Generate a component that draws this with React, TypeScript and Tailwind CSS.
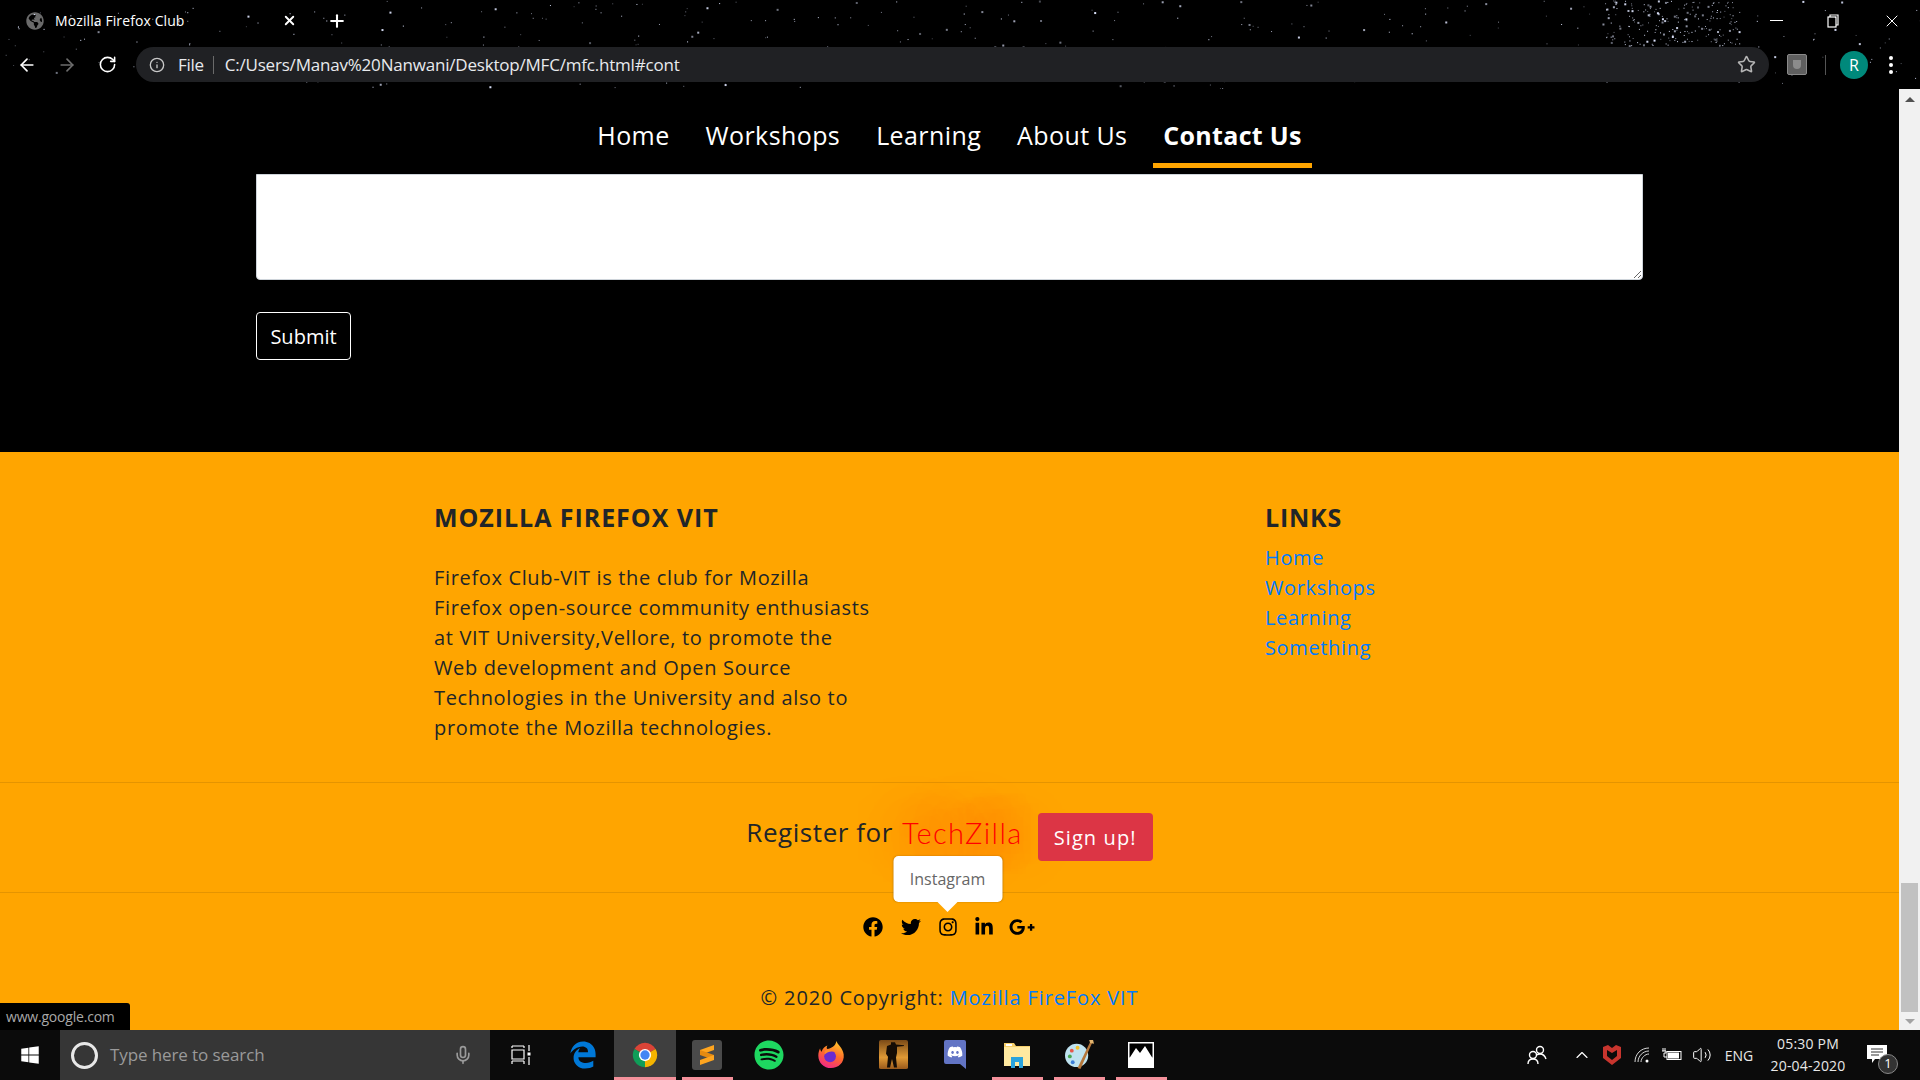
import React, { useMemo } from 'react';
import { ArrowLeft, ArrowRight, RotateCw, Info, Star, X, Plus, Mic, ChevronUp, Volume2 } from 'lucide-react';
import { FaFacebook, FaTwitter, FaInstagram, FaLinkedinIn, FaGooglePlusG, FaWindows, FaGlobeAmericas, FaSpotify, FaDiscord, FaEdgeLegacy } from 'react-icons/fa';

const sans = "font-['Open_Sans','Noto_Sans',sans-serif]";

// tiny seeded generator so the star field stays the same on every render
const makeStars = () => {
  let seed = 1234;
  const rnd = () => {
    seed = (seed * 16807) % 2147483647;
    return seed / 2147483647;
  };
  const stars: { x: number; y: number; s: number; o: number }[] = [];
  for (let i = 0; i < 420; i++) {
    stars.push({ x: rnd() * 1920, y: rnd() * 89, s: rnd() > 0.85 ? 2 : 1, o: 0.3 + rnd() * 0.7 });
  }
  for (let i = 0; i < 200; i++) {
    stars.push({ x: 1600 + rnd() * 140, y: rnd() * 46, s: rnd() > 0.8 ? 2 : 1, o: 0.4 + rnd() * 0.6 });
  }
  return stars;
};

const StarField = () => {
  const stars = useMemo(makeStars, []);
  return (
    <svg className="absolute inset-0 h-[89px] w-[1920px]" viewBox="0 0 1920 89">
      {stars.map((s, i) => (
        <rect key={i} x={s.x} y={s.y} width={s.s} height={s.s} fill="#dfe6ff" opacity={s.o} />
      ))}
    </svg>
  );
};

const ChromeBar = () => (
  <div className="relative h-[89px] shrink-0 bg-black text-white">
    <StarField />
    <div className="relative flex h-[47px] items-center pb-[6px]">
      <FaGlobeAmericas size={18} className="ml-[26px] text-[#6a6a6a]" />
      <span className="ml-[11px] w-[227px] text-[14px] tracking-[0.1px] text-white">Mozilla Firefox Club</span>
      <X size={15} strokeWidth={3} />
      <Plus size={20} strokeWidth={2.5} className="ml-[30px]" />
      <div className="ml-auto flex items-center">
        <div className="h-[1.5px] w-[13px] bg-white" />
        <svg width="14" height="14" viewBox="0 0 14 14" className="ml-[44px]" fill="none" stroke="white" strokeWidth="1.2">
          <rect x="1" y="3" width="8" height="10" />
          <path d="M3 3V1h8v10H9" />
        </svg>
        <X size={20} strokeWidth={1.2} className="ml-[41px] mr-[18px]" />
      </div>
    </div>
    <div className="relative flex h-[35px] items-center">
      <div className="flex w-[136px] items-center pl-[17px]">
        <ArrowLeft size={20} />
        <ArrowRight size={20} className="ml-[20px] text-[#6e6e6e]" />
        <RotateCw size={19} className="ml-[21px]" />
      </div>
      <div className="flex h-[35px] w-[1633px] items-center rounded-full bg-[#202124] pl-[13px]">
        <Info size={16} className="text-[#c8c8c8]" />
        <span className="ml-[13px] text-[17px] tracking-[-0.3px] text-[#e8eaed]">File</span>
        <div className="ml-[9px] h-[18px] w-px bg-[#6a6a6a]" />
        <span className="ml-[11px] text-[17px] tracking-[-0.2px] text-[#e8eaed]">C:/Users/Manav%20Nanwani/Desktop/MFC/mfc.html#cont</span>
        <Star size={19} className="ml-auto mr-[13px] text-[#b5b5b5]" />
      </div>
      <div className="ml-[18px] flex h-[21px] w-[20px] items-center justify-center rounded-[2px] border border-[#8a8a8a] bg-[#5f5f5f]">
        <div className="h-[9px] w-[8px] rounded-b-[4px] bg-[#8b8b8b]" />
      </div>
      <div className="ml-[18px] h-[20px] w-px bg-[#555]" />
      <div className="ml-[14px] flex h-[28px] w-[28px] items-center justify-center rounded-full bg-[#00897b] text-[16px] text-white">R</div>
      <div className="ml-[21px] flex flex-col gap-[3px]">
        <div className="h-[4px] w-[4px] rounded-full bg-white" />
        <div className="h-[4px] w-[4px] rounded-full bg-white" />
        <div className="h-[4px] w-[4px] rounded-full bg-white" />
      </div>
    </div>
  </div>
);

const navItems = ['Home', 'Workshops', 'Learning', 'About Us'];

const Nav = () => (
  <nav className="flex h-[85px] shrink-0 items-start justify-center bg-black pt-[25px] text-white">
    {navItems.map((n) => (
      <a key={n} className="mx-[8px] px-[10px] text-[25px] leading-[42px] tracking-[0.4px]">{n}</a>
    ))}
    <a className="mx-[8px] border-b-[5px] border-[#ffa500] px-[10px] pb-[7px] text-[25px] font-bold leading-[42px] tracking-[0.3px]">Contact Us</a>
  </nav>
);

const Form = () => (
  <div className="flex h-[278px] shrink-0 flex-col items-start bg-black pl-[256px]">
    <textarea className="h-[106px] w-[1387px] resize-y rounded-b-[4px] border border-[#ced4da] bg-white" />
    <button className="mt-[32px] h-[48px] w-[95px] rounded-[4px] border border-white pt-[2px] text-[20px] text-white">Submit</button>
  </div>
);

const About = () => (
  <div className="flex h-[331px] shrink-0 border-b border-black/10 pl-[434px] pt-[50px] text-[#212529]">
    <div className="w-[831px]">
      <h5 className="mb-[31px] text-[25px] font-bold leading-[30px] tracking-[0.95px]">MOZILLA FIREFOX VIT</h5>
      <p className="text-[20px] leading-[30px] tracking-[0.65px]">
        Firefox Club-VIT is the club for Mozilla<br />
        Firefox open-source community enthusiasts<br />
        at VIT University,Vellore, to promote the<br />
        Web development and Open Source<br />
        Technologies in the University and also to<br />
        promote the Mozilla technologies.
      </p>
    </div>
    <div>
      <h5 className="mb-[11px] text-[25px] font-bold leading-[30px] tracking-[0.8px]">LINKS</h5>
      <ul className="text-[20px] leading-[30px] tracking-[0.65px] text-[#007bff]">
        <li>Home</li>
        <li>Workshops</li>
        <li>Learning</li>
        <li>Something</li>
      </ul>
    </div>
  </div>
);

const Register = () => (
  <div className="flex h-[110px] shrink-0 items-start justify-center border-b border-black/10 pt-[30px]">
    <span className="text-[26px] leading-[39px] tracking-[0.55px] text-[#212529]">Register for</span>
    <span className="ml-[9px] font-['Lato',sans-serif] text-[29px] font-light leading-[39px] tracking-[1.4px] text-[#ff0000] [text-shadow:0_0_40px_#ff3b00,0_0_70px_#ff3b00]">TechZilla</span>
    <button className="ml-[15px] h-[48px] w-[115px] rounded-[4px] bg-[#dc3545] pt-[2px] text-[20px] tracking-[1.1px] text-white">Sign up!</button>
  </div>
);

const Social = () => (
  <div className="flex shrink-0 justify-center pr-[2px] pt-[24px] text-black">
    <FaFacebook size={20} className="mr-[18px]" />
    <FaTwitter size={20} className="mr-[17px]" />
    <div className="relative mr-[16px]">
      <FaInstagram size={20} />
      <div className={`absolute bottom-[35px] left-1/2 flex h-[46px] w-[109px] -translate-x-1/2 items-center justify-center rounded-[5px] bg-white text-[16px] text-[#666] shadow-[0_0_2px_rgba(0,0,0,0.25)] ${sans}`}>
        Instagram
        <div className="absolute left-1/2 top-[46px] h-0 w-0 -translate-x-1/2 border-x-[10px] border-t-[10px] border-x-transparent border-t-white" />
      </div>
    </div>
    <FaLinkedinIn size={20} className="mr-[15px]" />
    <FaGooglePlusG size={26} className="-my-[3px]" />
  </div>
);

const Footer = () => (
  <footer className="flex-1 bg-[#ffa500]">
    <About />
    <Register />
    <Social />
    <p className="mt-[46px] text-center text-[20px] leading-[30px] tracking-[0.87px] text-[#212529]">
      © 2020 Copyright: <a className="text-[#007bff]">Mozilla FireFox VIT</a>
    </p>
  </footer>
);

const Scrollbar = () => (
  <div className="flex w-[21px] shrink-0 flex-col items-center bg-[#f1f1f1]">
    <div className="mt-[8px] h-0 w-0 border-x-[5px] border-b-[5px] border-x-transparent border-b-[#505050]" />
    <div className="mt-auto h-[129px] w-[17px] bg-[#c1c1c1]" />
    <div className="mb-[6px] mt-[7px] h-0 w-0 border-x-[5px] border-t-[5px] border-x-transparent border-t-[#a3a3a3]" />
  </div>
);

const ChromeLogo = () => (
  <svg width="28" height="28" viewBox="0 0 32 32">
    <path d="M16 16 3.9 9A14 14 0 0 1 28.1 9Z" fill="#db4437" />
    <path d="M16 16 28.1 9A14 14 0 0 1 16 30Z" fill="#f4b400" />
    <path d="M16 16V30A14 14 0 0 1 3.9 9Z" fill="#0f9d58" />
    <circle cx="16" cy="16" r="7" fill="#fff" />
    <circle cx="16" cy="16" r="5.3" fill="#4285f4" />
  </svg>
);

const SublimeLogo = () => (
  <svg width="30" height="30" viewBox="0 0 30 30">
    <rect width="30" height="30" rx="3" fill="#4a4a4a" />
    <path d="M22 5 8 10v5l14-5z" fill="#ffa51f" />
    <path d="M8 10l14 5v5L8 15z" fill="#e58a10" />
    <path d="M22 15 8 20v5l14-5z" fill="#ffa51f" />
  </svg>
);

const FirefoxLogo = () => (
  <svg width="28" height="29" viewBox="0 0 30 32">
    <defs>
      <linearGradient id="ff" x1="0.7" y1="0" x2="0.3" y2="1">
        <stop offset="0" stopColor="#ffc62a" />
        <stop offset="0.5" stopColor="#ff6a2a" />
        <stop offset="1" stopColor="#f0268a" />
      </linearGradient>
    </defs>
    <path d="M21 1c1 4 7 7 8 15 1 9-6 15-14 15C7 31 1 25 1 17c0-3 1-6 2-8 0 2 1 3 2 4 0-3 3-6 6-7-1 2-1 3 0 4 4-1 9-3 10-9z" fill="url(#ff)" />
    <circle cx="14" cy="18" r="6.5" fill="#6a2bd0" />
    <path d="M8 12c3-2 8-2 10 1-3-1-7 0-10 3z" fill="#ff8a2a" />
  </svg>
);

const StrikeLogo = () => (
  <svg width="29" height="29" viewBox="0 0 29 38" preserveAspectRatio="none">
    <defs>
      <linearGradient id="cs" x1="0" y1="0" x2="0" y2="1">
        <stop offset="0" stopColor="#7a4a17" />
        <stop offset="0.6" stopColor="#e09a35" />
        <stop offset="1" stopColor="#9a5a1c" />
      </linearGradient>
    </defs>
    <rect width="29" height="38" rx="2" fill="url(#cs)" />
    <path d="M12 3h4l1 3 8 1v1l-7 1 0 8-1 6 1 13h-3l-2-11-2 11H8l1-14-2-4 1-10 4-2z" fill="#140c05" />
  </svg>
);

const DiscordLogo = () => (
  <svg width="24" height="29" viewBox="0 0 24 29">
    <path d="M3 0h18a2 2 0 0 1 2 2v27l-6-5H3a2 2 0 0 1-2-2V2a2 2 0 0 1 2-2z" fill="#6274c4" />
    <foreignObject x="4" y="4" width="16" height="16">
      <FaDiscord size={16} color="#fff" />
    </foreignObject>
  </svg>
);

const ExplorerLogo = () => (
  <svg width="28" height="26" viewBox="0 0 28 26">
    <path d="M1 1h10l2 3h14v20H1z" fill="#f5cf6b" />
    <rect x="1" y="5" width="26" height="19" fill="#ffe9a0" />
    <rect x="3" y="2" width="6" height="2" fill="#fff" />
    <path d="M8 26V15h12v11h-4v-6h-4v6z" fill="#2aa3dc" />
  </svg>
);

const PaintLogo = () => (
  <svg width="29" height="29" viewBox="0 0 30 30">
    <ellipse cx="12" cy="16" rx="12" ry="12" fill="#bfe3f0" />
    <circle cx="7" cy="11" r="2" fill="#e8574a" />
    <circle cx="13" cy="8" r="2" fill="#f2c230" />
    <circle cx="5" cy="17" r="2" fill="#4aa84f" />
    <circle cx="8" cy="23" r="2" fill="#3d7fd9" />
    <path d="M26 2 28 3 16 30 13 29z" fill="#b5763a" />
    <path d="M25 0h4l1 4-4-1z" fill="#e2b36d" />
  </svg>
);

const PhotosLogo = () => (
  <svg width="26" height="26" viewBox="0 0 26 26">
    <rect width="26" height="26" fill="#fff" />
    <rect x="1.5" y="1.5" width="23" height="14" fill="#000" />
    <path d="M1.5 16 8 6l4 5 5-7 7.5 12z" fill="#fff" />
  </svg>
);

const TaskViewIcon = () => (
  <svg width="20" height="20" viewBox="0 0 20 20" fill="none" stroke="white" strokeWidth="1.2">
    <path d="M1 1h12M13 1v2M1 3V1M1 5h12v9H1zM1 16h12M1 19v-3M13 19v-3" />
    <path d="M18 0v6M18 12v8" />
    <rect x="16.5" y="7.5" width="3" height="3" fill="white" stroke="none" />
  </svg>
);

const apps: { id: string; node: React.ReactNode; bar?: boolean; active?: boolean }[] = [
  { id: 'edge', node: <FaEdgeLegacy size={28} color="#0078d7" /> },
  { id: 'chrome', node: <ChromeLogo />, bar: true, active: true },
  { id: 'sublime', node: <SublimeLogo />, bar: true },
  { id: 'spotify', node: <FaSpotify size={30} color="#1ed760" /> },
  { id: 'firefox', node: <FirefoxLogo /> },
  { id: 'cs', node: <StrikeLogo /> },
  { id: 'discord', node: <DiscordLogo /> },
  { id: 'explorer', node: <ExplorerLogo />, bar: true },
  { id: 'paint', node: <PaintLogo />, bar: true },
  { id: 'photos', node: <PhotosLogo />, bar: true },
];

const Taskbar = () => (
  <div className="flex h-[50px] shrink-0 bg-[#0b0b0b] text-white">
    <div className="flex w-[60px] items-center justify-center">
      <FaWindows size={20} />
    </div>
    <div className="flex w-[430px] items-center bg-[#363636] pl-[11px] pr-[17px]">
      <div className="h-[27px] w-[27px] rounded-full border-[3px] border-[#e8e8e8]" />
      <span className="ml-[12px] text-[17px] tracking-[-0.1px] text-[#9a9a9a]">Type here to search</span>
      <Mic size={20} className="ml-auto text-[#9a9a9a]" />
    </div>
    <div className="flex w-[62px] items-center justify-center"><TaskViewIcon /></div>
    {apps.map((a) => (
      <div key={a.id} className={`flex w-[62px] flex-col items-center ${a.active ? 'bg-[#3f3f3f]' : ''}`}>
        <div className="flex flex-1 items-center justify-center pt-[2px]">{a.node}</div>
        <div className={`h-[3px] ${a.active ? 'w-[62px]' : 'w-[51px]'} ${a.bar ? 'bg-[#f4919b]' : ''}`} />
      </div>
    ))}
    <div className="ml-auto flex items-center pr-[17px]">
      <div className="flex w-[44px] justify-center">
        <svg width="20" height="20" viewBox="0 0 20 20" fill="none" stroke="white" strokeWidth="1.4">
          <circle cx="13" cy="5" r="3.5" />
          <circle cx="6" cy="10" r="3.5" />
          <path d="M1 19c0-3 2-5 5-5s5 2 5 5M10 10c1-1 2-1 3-1 3 0 5 2 6 5" />
        </svg>
      </div>
      <div className="ml-[8px] flex w-[30px] justify-center"><ChevronUp size={20} strokeWidth={1.4} /></div>
      <div className="flex w-[30px] justify-center">
        <svg width="18" height="20" viewBox="0 0 18 20">
          <path d="M0 2 5 0l4 3 4-3 5 2v11l-9 7-9-7z" fill="#c8352e" />
          <path d="M4 5l5 3 5-3v6l-5 4-5-4z" fill="#0b0b0b" />
        </svg>
      </div>
      <div className="flex w-[30px] justify-center">
        <svg width="16" height="16" viewBox="0 0 16 16" fill="none" stroke="#d8d8d8" strokeWidth="1">
          <path d="M1 15C1 7 7 1 15 1M4 15c0-6 5-11 11-11M7 15c0-4 4-8 8-8" />
          <circle cx="13" cy="14" r="1.5" fill="white" stroke="none" />
        </svg>
      </div>
      <div className="flex w-[30px] justify-center">
        <svg width="20" height="14" viewBox="0 0 20 14" fill="none" stroke="white" strokeWidth="1">
          <rect x="5" y="3.5" width="14" height="8" />
          <rect x="6" y="4.5" width="11" height="6" fill="white" stroke="none" />
          <path d="M1 0v3M3 0v3M0 3h4v2H2v4h3" />
        </svg>
      </div>
      <div className="flex w-[30px] justify-center"><Volume2 size={20} strokeWidth={1.2} /></div>
      <div className="flex w-[44px] justify-center text-[14px] text-[#e8e8e8]">ENG</div>
      <div className="flex w-[94px] flex-col items-center text-[14px] leading-[22px] tracking-[0.2px] text-[#e8e8e8]">
        <span>05:30 PM</span>
        <span>20-04-2020</span>
      </div>
      <div className="relative flex h-[50px] w-[48px] justify-center pr-[4px] pt-[15px]">
        <svg width="20" height="19" viewBox="0 0 20 19">
          <path d="M0 0h20v14H8l-3 4v-4H0z" fill="white" />
          <path d="M4 4h12M4 7h12M4 10h8" stroke="#333" strokeWidth="1" />
        </svg>
        <div className="absolute left-[23px] top-[24px] flex h-[20px] w-[20px] items-center justify-center rounded-full border border-[#888] bg-[#333] text-[13px] text-white">1</div>
      </div>
    </div>
  </div>
);

export default function App() {
  return (
    <div className={`relative flex h-[1080px] w-[1920px] flex-col overflow-hidden bg-black ${sans}`}>
      <ChromeBar />
      <div className="flex min-h-0 flex-1">
        <main className="flex min-w-0 flex-1 flex-col">
          <Nav />
          <Form />
          <Footer />
        </main>
        <Scrollbar />
      </div>
      <Taskbar />
      <div className="absolute bottom-[50px] left-0 flex h-[27px] w-[130px] items-center rounded-tr-[3px] bg-black pl-[6px] text-[14px] tracking-[-0.2px] text-[#a8a8a8]">www.google.com</div>
    </div>
  );
}
